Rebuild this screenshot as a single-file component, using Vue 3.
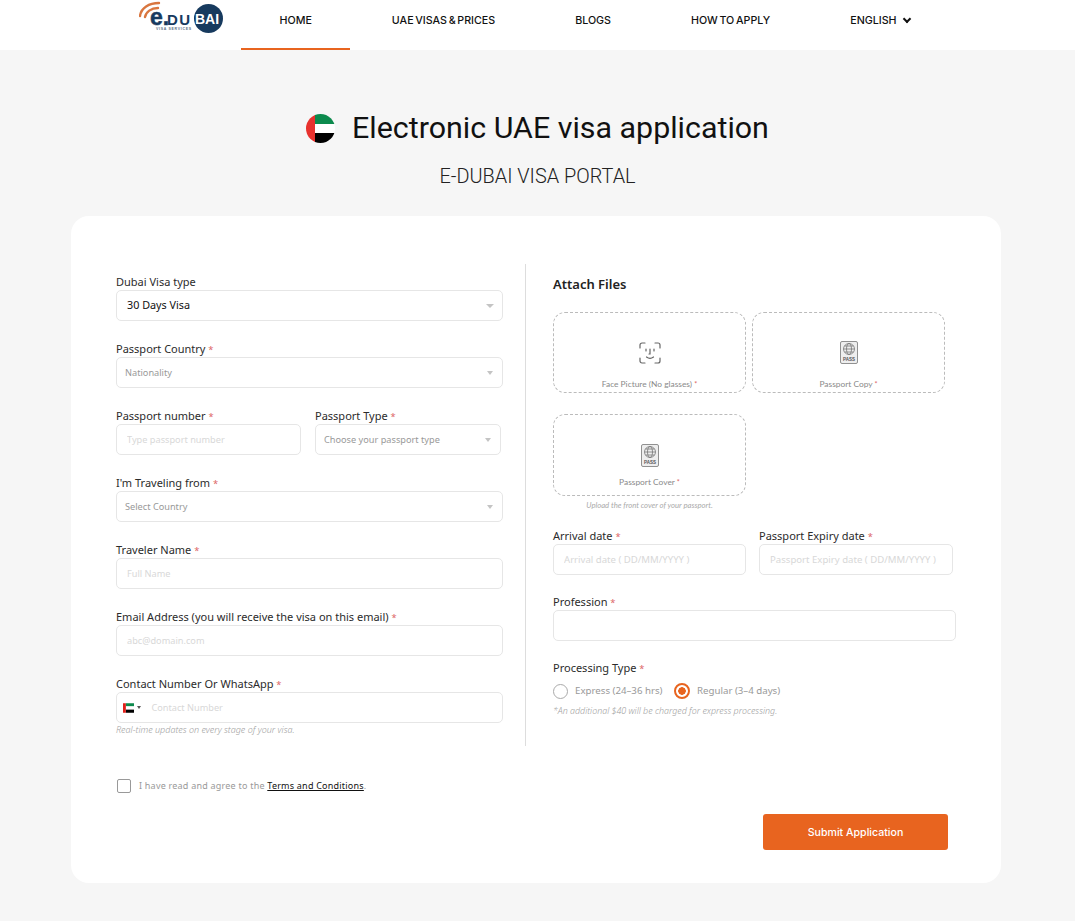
<template>
  <div class="page">
    <header class="topbar">
      <svg class="logo" width="90" height="36" viewBox="0 0 90 36">
        <path d="M1 16 C2 8 10 3 20 3" fill="none" stroke="#d9763f" stroke-width="2.400" stroke-linecap="round" />
        <path d="M6 17 C7 12 12 8 19 8" fill="none" stroke="#d9763f" stroke-width="2.400" stroke-linecap="round" />
        <circle cx="69.500" cy="18.500" r="14.500" fill="#173a5e" />
        <text x="11" y="24.500" class="logo-e">e.</text>
        <text x="28" y="24.500" class="logo-du">DU</text>
        <text x="56" y="24" class="logo-bai">BAI</text>
        <text x="17" y="30" class="logo-sub">VISA SERVICES</text>
      </svg>
      <nav class="nav">
        <a v-for="item in navItems" :key="item" class="nav-item" :class="{ active: item === 'HOME' }">{{ item }}</a>
        <a class="nav-item lang">ENGLISH <span class="chev"></span></a>
      </nav>
    </header>

    <div class="heading">
      <div class="title-row">
        <svg width="29" height="29" viewBox="0 0 29 29">
          <defs><clipPath id="flagclip"><circle cx="14.500" cy="14.500" r="14.500" /></clipPath></defs>
          <g clip-path="url(#flagclip)">
            <rect x="9" width="20" height="10" fill="#0c8a4d" />
            <rect x="9" y="10" width="20" height="9" fill="#fff" />
            <rect x="9" y="19" width="20" height="10" fill="#000" />
            <rect width="9" height="29" fill="#e8322e" />
          </g>
        </svg>
        <h1>Electronic UAE visa application</h1>
      </div>
      <p class="subtitle">E-DUBAI VISA PORTAL</p>
    </div>

    <main class="card">
      <div class="columns">
        <section class="left">
          <div class="field">
            <label>Dubai Visa type</label>
            <div class="select filled">30 Days Visa<span class="caret big"></span></div>
          </div>
          <div class="field">
            <label>Passport Country <i>*</i></label>
            <div class="select">Nationality<span class="caret"></span></div>
          </div>
          <div class="row">
            <div class="field passport-no">
              <label>Passport number <i>*</i></label>
              <input placeholder="Type passport number" />
            </div>
            <div class="field passport-type">
              <label>Passport Type <i>*</i></label>
              <div class="select">Choose your passport type<span class="caret"></span></div>
            </div>
          </div>
          <div class="field">
            <label>I'm Traveling from <i>*</i></label>
            <div class="select">Select Country<span class="caret"></span></div>
          </div>
          <div class="field">
            <label>Traveler Name <i>*</i></label>
            <input placeholder="Full Name" />
          </div>
          <div class="field">
            <label>Email Address (you will receive the visa on this email) <i>*</i></label>
            <input placeholder="abc@domain.com" />
          </div>
          <div class="field">
            <label>Contact Number Or WhatsApp <i>*</i></label>
            <div class="phone">
              <svg width="12" height="10" viewBox="0 0 12 10">
                <rect x="3" width="9" height="3.300" fill="#0c8a4d" />
                <rect x="3" y="3.300" width="9" height="3.400" fill="#fff" />
                <rect x="3" y="6.700" width="9" height="3.300" fill="#000" />
                <rect width="3" height="10" fill="#e0201b" />
              </svg>
              <span class="mini-caret"></span>
              <input placeholder="Contact Number" />
            </div>
            <small class="hint">Real-time updates on every stage of your visa.</small>
          </div>
        </section>

        <div class="divider"></div>

        <section class="right">
          <h2>Attach Files</h2>
          <div class="uploads">
            <div class="drop">
              <svg width="22" height="22" viewBox="0 0 22 22" fill="none" stroke="#666" stroke-width="1.200" stroke-linecap="round">
                <path d="M1 6V3a2 2 0 0 1 2-2h3M16 1h3a2 2 0 0 1 2 2v3M21 16v3a2 2 0 0 1-2 2h-3M6 21H3a2 2 0 0 1-2-2v-3" />
                <path d="M7 7v2M15 7v2M11 7v5h-1M7.500 15c2 1.500 5 1.500 7 0" />
              </svg>
              <span>Face Picture (No glasses) <i>*</i></span>
            </div>
            <div class="drop">
              <svg width="18" height="23" viewBox="0 0 18 23" fill="#eee" stroke="#777" stroke-width=".8">
                <rect x=".5" y=".5" width="17" height="22" rx="1.500" />
                <g fill="none">
                  <circle cx="9" cy="8" r="5.500" />
                  <ellipse cx="9" cy="8" rx="2.500" ry="5.500" />
                  <path d="M3.500 8h11M4.500 5h9M4.500 11h9" />
                </g>
                <text x="9" y="19.500" class="pass">PASS</text>
              </svg>
              <span>Passport Copy <i>*</i></span>
            </div>
            <div class="drop tall">
              <svg width="18" height="23" viewBox="0 0 18 23" fill="#eee" stroke="#777" stroke-width=".8">
                <rect x=".5" y=".5" width="17" height="22" rx="1.500" />
                <g fill="none">
                  <circle cx="9" cy="8" r="5.500" />
                  <ellipse cx="9" cy="8" rx="2.500" ry="5.500" />
                  <path d="M3.500 8h11M4.500 5h9M4.500 11h9" />
                </g>
                <text x="9" y="19.500" class="pass">PASS</text>
              </svg>
              <span>Passport Cover <i>*</i></span>
            </div>
          </div>
          <small class="cover-note">Upload the front cover of your passport.</small>

          <div class="row dates">
            <div class="field date">
              <label>Arrival date <i>*</i></label>
              <input placeholder="Arrival date ( DD/MM/YYYY )" />
            </div>
            <div class="field date">
              <label>Passport Expiry date <i>*</i></label>
              <input placeholder="Passport Expiry date ( DD/MM/YYYY )" />
            </div>
          </div>
          <div class="field">
            <label>Profession <i>*</i></label>
            <input />
          </div>
          <div class="field">
            <label>Processing Type <i>*</i></label>
            <div class="radios">
              <span v-for="opt in speeds" :key="opt" class="radio" :class="{ on: speed === opt }" @click="speed = opt">
                <b></b>{{ opt }}
              </span>
            </div>
            <small class="hint extra">*An additional $40 will be charged for express processing.</small>
          </div>
        </section>
      </div>

      <div class="terms">
        <span class="check"></span>
        <span>I have read and agree to the <a>Terms and Conditions</a>.</span>
      </div>
      <div class="actions">
        <button>Submit Application</button>
      </div>
    </main>
  </div>
</template>

<script setup>
import { ref } from 'vue'

const navItems = ['HOME', 'UAE VISAS & PRICES', 'BLOGS', 'HOW TO APPLY']
const speeds = ['Express (24–36 hrs)', 'Regular (3–4 days)']
const speed = ref(speeds[1])
</script>

<style>
body { background: #f6f6f6; }
</style>

<style scoped>
.page {
  min-height: 921px;
  background: #f6f6f6;
  font-family: "Noto Sans", sans-serif;
  color: #222;
}
.topbar {
  height: 50px;
  background: #fff;
  display: flex;
  padding-left: 139px;
}
.logo { flex-shrink: 0; }
.logo-e { font: 700 23px "Liberation Sans", sans-serif; fill: #173a5e; stroke: #173a5e; stroke-width: .5px; }
.logo-du { font: 700 15px "Liberation Sans", sans-serif; fill: #173a5e; letter-spacing: 1.500px; }
.logo-bai { font: 700 14px "Liberation Sans", sans-serif; fill: #fff; }
.logo-sub { font: 700 3.500px "Liberation Sans", sans-serif; fill: #5c6f84; letter-spacing: .7px; }
.nav { display: flex; gap: 3px; margin-left: 12px; }
.nav-item {
  padding: 0 38.500px;
  height: 50px;
  box-sizing: border-box;
  font: 500 10.700px/41px Inter, sans-serif;
  word-spacing: -1.200px;
  color: #111;
  white-space: nowrap;
}
.nav-item.active { border-bottom: 2px solid #e8641f; }
.chev {
  display: inline-block;
  width: 4px;
  height: 4px;
  margin: 0 0 2px 6px;
  border-right: 2px solid #111;
  border-bottom: 2px solid #111;
  transform: rotate(45deg);
}
.heading { text-align: center; padding-top: 60px; }
.title-row { display: flex; justify-content: center; align-items: center; gap: 17px; }
h1 {
  margin: 0;
  font: 450 30.400px/36px Roboto, sans-serif;
  color: #111;
}
.subtitle {
  margin: 20px 0 0;
  font: 300 19.900px/22px Roboto, sans-serif;
  color: #222;
}
.card {
  margin: 28px 74px 0 71px;
  height: 667px;
  box-sizing: border-box;
  background: #fff;
  border-radius: 18px;
  padding: 48px 45px 0;
}
.columns { display: flex; height: 482px; }
.left { width: 387px; padding-top: 10px; display: flex; flex-direction: column; gap: 20px; flex-shrink: 0; }
.divider { width: 1px; background: #ddd; margin: 0 27px 0 22px; flex-shrink: 0; }
.right { flex: 1; min-width: 0; }
.field { display: flex; flex-direction: column; position: relative; }
label {
  font-size: 11px;
  line-height: 16px;
  color: #2b2b2b;
}
i { color: #d66; font-style: normal; font-size: .85em; line-height: 0; }
input, .select, .phone {
  height: 31px;
  box-sizing: border-box;
  border: 1px solid #e6e6e6;
  border-radius: 5px;
  background: #fff;
  font-family: "Noto Sans", sans-serif;
  font-size: 9.200px;
  outline: none;
}
input { padding: 0 10px; width: 100%; }
input::placeholder { color: #d8d8d8; }
.select {
  display: flex;
  align-items: center;
  justify-content: space-between;
  padding: 0 9px 0 8px;
  color: #999;
}
.select.filled { color: #111; font-size: 10.800px; padding-left: 10px; padding-bottom: 2px; }
.caret {
  width: 0;
  height: 0;
  border: 3.500px solid transparent;
  border-top: 4px solid #c4c4c4;
  border-bottom: 0;
}
.caret.big { border-width: 4.500px 4.500px 0; margin-top: 2px; margin-right: -1px; }
.row { display: flex; gap: 14px; }
.passport-no { width: 185px; flex-shrink: 0; }
.passport-type { flex: 1; margin-right: 2px; }
.phone { display: flex; align-items: center; padding-left: 6px; }
.phone input { border: 0; height: 27px; padding: 0 0 0 10px; }
.mini-caret {
  width: 0;
  height: 0;
  margin-left: 3px;
  border: 2px solid transparent;
  border-top: 3px solid #555;
  border-bottom: 0;
  flex-shrink: 0;
}
.hint {
  font-size: 9px;
  line-height: 14px;
  font-style: italic;
  font-weight: 300;
  color: #a0a0a0;
}
h2 {
  margin: 0;
  padding-top: 10px;
  font-size: 13px;
  line-height: 20px;
  font-weight: 600;
  color: #222;
}
.uploads {
  display: grid;
  grid-template-columns: 193px 193px;
  gap: 21px 6px;
  margin-top: 18px;
}
.drop {
  height: 81px;
  box-sizing: border-box;
  border: 1px dashed #bbb;
  border-radius: 12px;
  display: flex;
  flex-direction: column;
  align-items: center;
  justify-content: flex-end;
  gap: 14px;
  padding-bottom: 2px;
  font: 400 8.400px/12px Lato, sans-serif;
  color: #8a8a8a;
}
.drop.tall { height: 82px; gap: 9px; padding-bottom: 7px; }
.pass { font: 700 4.500px "Liberation Sans", sans-serif; text-anchor: middle; fill: #555; stroke: none; }
.cover-note {
  display: block;
  width: 193px;
  text-align: center;
  margin-top: 3px;
  font: italic 400 7.700px/12px Lato, sans-serif;
  color: #aaa;
}
.dates { margin: 17px 0 19px; gap: 13px; }
.date { width: 193px; flex-shrink: 0; }
.date + .date { width: 194px; }
.dates input { font-size: 9.600px; }
.right > .field + .field { margin-top: 19px; }
.radios { display: flex; align-items: center; gap: 11.500px; margin-top: 7px; font-size: 9.700px; color: #999; }
.radio { display: flex; align-items: center; gap: 7px; cursor: pointer; line-height: 16px; }
.radio b {
  width: 15px;
  height: 15px;
  box-sizing: border-box;
  border: 1px solid #aaa;
  border-radius: 50%;
  background: #fff;
}
.radio.on b {
  width: 16px;
  height: 16px;
  border: 2px solid #e8641f;
  background: radial-gradient(circle, #e8641f 0 3.500px, #fff 4px);
}
.extra { margin-top: 5px; font-size: 8.900px; }
.terms {
  display: flex;
  align-items: center;
  gap: 8px;
  margin: 33px 0 0 1px;
  font-size: 9px;
  line-height: 14px;
  color: #999;
  letter-spacing: .22px;
}
.terms a { color: #111; text-decoration: underline; }
.check {
  width: 14px;
  height: 14px;
  box-sizing: border-box;
  border: 1px solid #999;
  border-radius: 2px;
}
.actions { display: flex; justify-content: flex-end; margin: 21px 8px 0 0; }
button {
  width: 185px;
  height: 36px;
  border: 0;
  border-radius: 3px;
  background: #e8641f;
  color: #fff;
  font: 500 10.600px Inter, sans-serif;
}
</style>
